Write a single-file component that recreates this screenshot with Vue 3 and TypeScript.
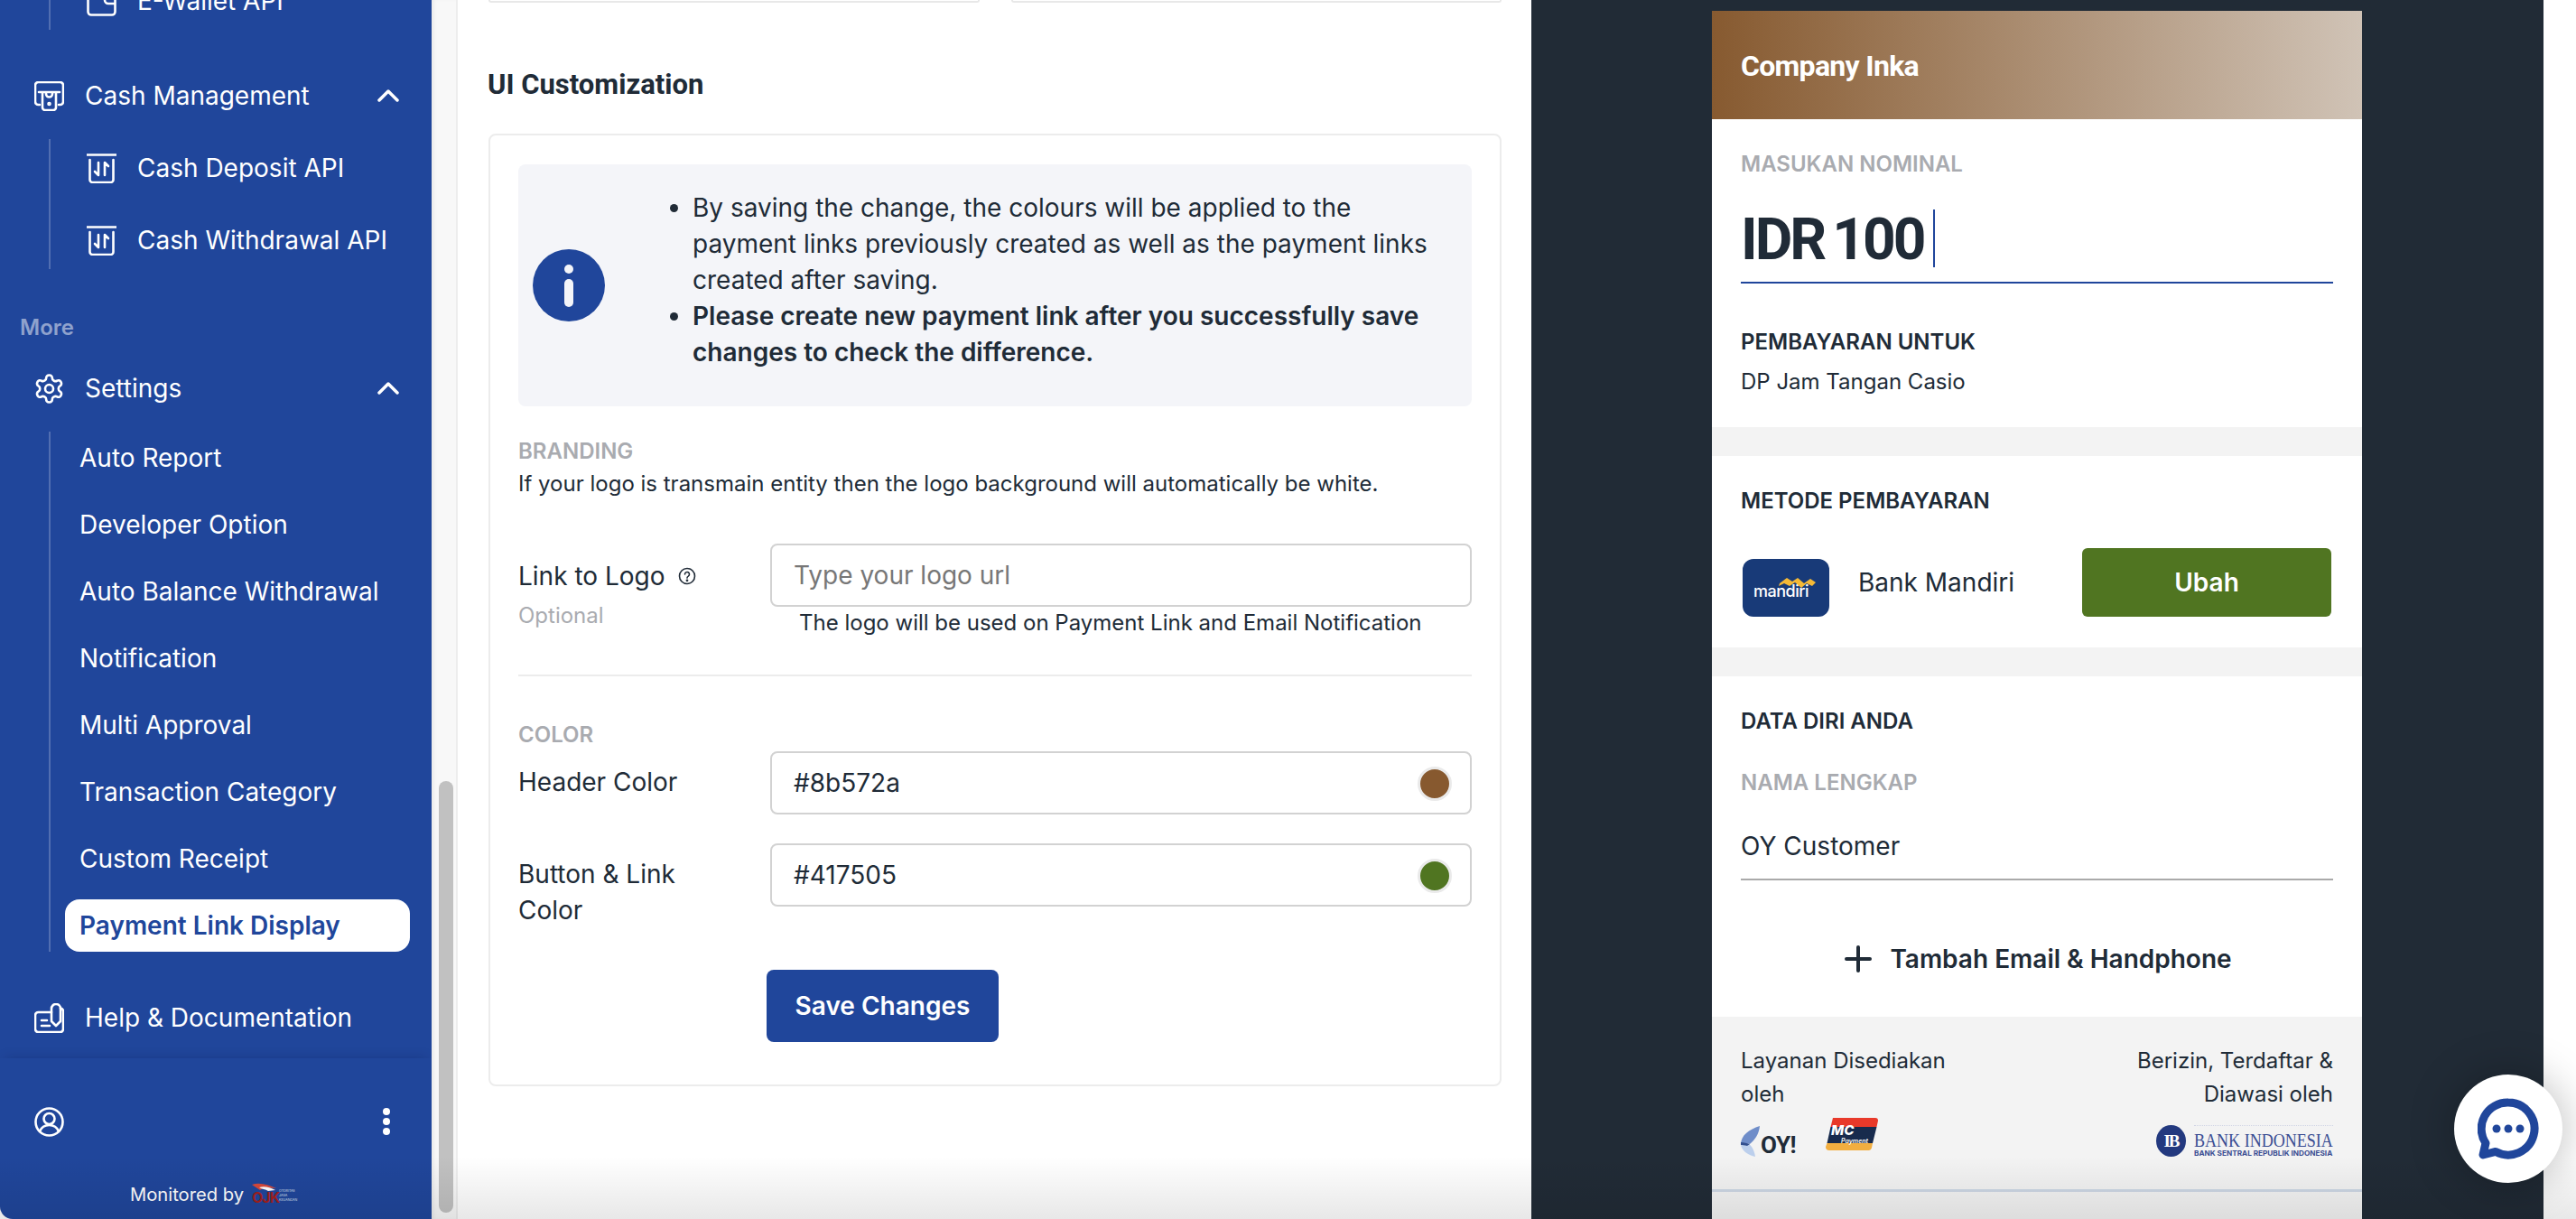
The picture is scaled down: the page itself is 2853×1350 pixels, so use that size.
<script setup lang="ts">
const settingsItems: string[] = ['Auto Report', 'Developer Option', 'Auto Balance Withdrawal', 'Notification', 'Multi Approval', 'Transaction Category', 'Custom Receipt']
const cashItems: string[] = ['Cash Deposit API', 'Cash Withdrawal API']
const gear = 'M12.22 2h-.44a2 2 0 0 0-2 2v.18a2 2 0 0 1-1 1.73l-.43.25a2 2 0 0 1-2 0l-.15-.08a2 2 0 0 0-2.73.73l-.22.38a2 2 0 0 0 .73 2.73l.15.1a2 2 0 0 1 1 1.72v.51a2 2 0 0 1-1 1.74l-.15.09a2 2 0 0 0-.73 2.73l.22.38a2 2 0 0 0 2.73.73l.15-.08a2 2 0 0 1 2 0l.43.25a2 2 0 0 1 1 1.73V20a2 2 0 0 0 2 2h.44a2 2 0 0 0 2-2v-.18a2 2 0 0 1 1-1.73l.43-.25a2 2 0 0 1 2 0l.15.08a2 2 0 0 0 2.73-.73l.22-.39a2 2 0 0 0-.73-2.73l-.15-.08a2 2 0 0 1-1-1.74v-.5a2 2 0 0 1 1-1.74l.15-.09a2 2 0 0 0 .73-2.73l-.22-.38a2 2 0 0 0-2.73-.73l-.15.08a2 2 0 0 1-2 0l-.43-.25a2 2 0 0 1-1-1.73V4a2 2 0 0 0-2-2z'
</script>

<template>
  <div class="page">
    <aside class="sidebar">
      <div class="nav">
        <div class="sub cut">
          <div class="sub-row">
            <svg class="ico" viewBox="0 0 33 33"><path d="M1.500 4v24a3.500 3.500 0 0 0 3.500 3.500H28a3.500 3.500 0 0 0 3.500-3.500V5M31.500 11H24a4 4 0 0 0 0 8h7.500" /></svg>
            <span>E-Wallet API</span>
          </div>
        </div>

        <div class="row row-first">
          <svg class="ico" viewBox="0 0 33 33">
            <path d="M6 26H4.500A3.500 3.500 0 0 1 1 22.500V4.500A3.500 3.500 0 0 1 4.500 1h24A3.500 3.500 0 0 1 32 4.500v18a3.500 3.500 0 0 1-3.500 3.500H27" />
            <path d="M5 12h23M9 12v17a3 3 0 0 0 3 3h9a3 3 0 0 0 3-3V12M13 12v2a3.500 3.500 0 0 0 7 0v-2" />
            <circle cx="16.500" cy="25" r="1" />
          </svg>
          <span class="row-label">Cash Management</span>
          <svg class="chev" viewBox="0 0 24 14"><path d="M2 12 12 2l10 10" /></svg>
        </div>
        <div class="sub">
          <div v-for="c in cashItems" :key="c" class="sub-row">
            <svg class="ico" viewBox="0 0 33 33">
              <path d="M0 1.500h33M3.500 7v22a3 3 0 0 0 3 3h20a3 3 0 0 0 3-3V7" />
              <path d="M13 10v14M9 20l4 4M20 24V10l4 4" />
            </svg>
            <span>{{ c }}</span>
          </div>
        </div>

        <div class="section-title">More</div>

        <div class="row row-settings">
          <svg class="ico gear" viewBox="1 1 22 22"><path :d="gear" /><circle cx="12" cy="12" r="3" /></svg>
          <span class="row-label">Settings</span>
          <svg class="chev" viewBox="0 0 24 14"><path d="M2 12 12 2l10 10" /></svg>
        </div>
        <div class="sub">
          <div v-for="s in settingsItems" :key="s" class="plain">{{ s }}</div>
          <div class="plain active">Payment Link Display</div>
        </div>

        <div class="row row-first">
          <svg class="ico" viewBox="0 0 33 33">
            <path d="M19 10H4.500A3.500 3.500 0 0 0 1 13.500v15A3.500 3.500 0 0 0 4.500 32h24a3.500 3.500 0 0 0 3.500-3.500V9a3.500 3.500 0 0 0-3-3.400" />
            <path d="M19 20V6a5 5 0 0 1 10 0v14l-5 5z" />
            <path d="M8 19h6M8 25h9" />
          </svg>
          <span class="row-label">Help &amp; Documentation</span>
        </div>
      </div>

      <div class="side-foot">
        <div class="profile">
          <svg class="ico" viewBox="0 0 33 33">
            <circle cx="16.500" cy="16.500" r="15" />
            <circle cx="16.500" cy="13" r="6" />
            <path d="M6 27c2-5 6-7 10.500-7S25 22 27 27" />
          </svg>
          <div class="dots"><i></i><i></i><i></i></div>
        </div>
        <div class="monitored">
          <span>Monitored by</span>
          <svg class="ojk" viewBox="0 0 54 24">
            <path d="M0 2C8-1 18 2 27 6c-6 0-14-1-18 2C6 6 3 4 0 2z" fill="#d8493c" />
            <path d="M8 5c6-2 12 0 18 3l-8 1c-3-2-7-2-10-4z" fill="#fff" />
            <text x="0" y="22" class="ojk-mark">OJK</text>
            <text x="30" y="10" class="ojk-small">OTORITAS</text>
            <text x="30" y="15" class="ojk-small">JASA</text>
            <text x="30" y="20" class="ojk-small">KEUANGAN</text>
          </svg>
        </div>
      </div>
    </aside>

    <div class="gutter"><div class="thumb"></div></div>

    <main class="main">
      <div class="stubs"><div class="stub"></div><div class="stub"></div></div>
      <h2 class="heading">UI Customization</h2>

      <section class="card">
        <div class="info">
          <svg class="info-ico" viewBox="0 0 80 80">
            <circle cx="40" cy="40" r="40" fill="#20469b" />
            <rect x="35" y="17" width="10" height="10" rx="5" fill="#f4f5f9" />
            <rect x="35" y="33" width="10" height="31" rx="5" fill="#f4f5f9" />
          </svg>
          <ul class="info-list">
            <li>By saving the change, the colours will be applied to the payment links previously created as well as the payment links created after saving.</li>
            <li><strong>Please create new payment link after you successfully save changes to check the difference.</strong></li>
          </ul>
        </div>

        <div class="group-title branding">BRANDING</div>
        <p class="desc">If your logo is transmain entity then the logo background will automatically be white.</p>

        <div class="form-row logo-row">
          <div class="label logo-label">
            <div class="label-line">
              Link to Logo
              <svg class="q" viewBox="0 0 20 20">
                <circle cx="10" cy="10" r="8.500" />
                <path d="M7.500 8a2.500 2.500 0 1 1 3.800 2.100c-.9.500-1.300 1-1.300 2" />
                <circle cx="10" cy="14.800" r=".6" />
              </svg>
            </div>
            <div class="optional">Optional</div>
          </div>
          <div class="control">
            <div class="input placeholder">Type your logo url</div>
            <div class="hint">The logo will be used on Payment Link and Email Notification</div>
          </div>
        </div>

        <div class="divider"></div>

        <div class="group-title color-title">COLOR</div>
        <div class="form-row color-row">
          <div class="label label-a">Header Color</div>
          <div class="control">
            <div class="input"><span>#8b572a</span><i class="swatch brown"></i></div>
          </div>
        </div>
        <div class="form-row color-row second">
          <div class="label label-b">Button &amp; Link Color</div>
          <div class="control">
            <div class="input"><span>#417505</span><i class="swatch green"></i></div>
          </div>
        </div>

        <button class="save">Save Changes</button>
      </section>
    </main>

    <div class="pane">
      <div class="phone">
        <header class="ph-head">Company Inka</header>

        <section class="ph-sec sec-amount">
          <div class="muted">MASUKAN NOMINAL</div>
          <div class="amount"><span>IDR 100</span><i class="caret"></i></div>
          <div class="strong pay-for">PEMBAYARAN UNTUK</div>
          <div class="small pay-desc">DP Jam Tangan Casio</div>
        </section>

        <section class="ph-sec sec-method">
          <div class="strong">METODE PEMBAYARAN</div>
          <div class="method">
            <div class="mandiri">
              <svg class="wave" viewBox="0 0 44 14"><path d="M1 8 9 2l6 4 6-4 7 6 7-5 6 4-4 4-6-3-6 5-7-6-6 4-6-3-6 3z" fill="#f5b936" /></svg>
              <span>mandiri</span>
            </div>
            <span class="bank">Bank Mandiri</span>
            <button class="ubah">Ubah</button>
          </div>
        </section>

        <section class="ph-sec sec-data">
          <div class="strong">DATA DIRI ANDA</div>
          <div class="muted name-label">NAMA LENGKAP</div>
          <div class="name">OY Customer</div>
          <div class="add">
            <svg class="plus" viewBox="0 0 30 30"><path d="M15 2v26M2 15h26" /></svg>
            <span>Tambah Email &amp; Handphone</span>
          </div>
        </section>

        <footer class="ph-foot">
          <div class="foot-col">
            <div class="small foot-text">Layanan Disediakan oleh</div>
            <div class="logos">
              <div class="oy">
                <svg class="oy-leaf" viewBox="0 0 22 34">
                  <path d="M21 0C9 4 0 10 0 21c4-2 7-3 10-1 6-5 10-11 11-20z" fill="#6f8dc9" />
                  <path d="M0 21c1 6 7 11 16 13-1-6-3-11-7-14-3-1-6-1-9 1z" fill="#bccfec" />
                  <path d="M0 18c3 0 7 1 10 2l-3 2c-3-1-6-1-7-1z" fill="#33508f" />
                </svg>
                <span>OY!</span>
              </div>
              <svg class="mc" viewBox="0 0 58 36">
                <path d="M8 0h47a3 3 0 0 1 3 3l-1.500 7H5.500z" fill="#e8392a" />
                <path d="M5.500 10h51L52 28H1.500z" fill="#182b4d" />
                <path d="M1.500 28H52l-1 5a4 4 0 0 1-4 3H4a4 4 0 0 1-4-4z" fill="#f2ae40" />
                <text x="6" y="19" class="mc-big">MC</text>
                <text x="17" y="28" class="mc-small">Payment</text>
              </svg>
            </div>
          </div>
          <div class="foot-col right">
            <div class="small foot-text">Berizin, Terdaftar &amp; Diawasi oleh</div>
            <div class="logos">
              <div class="bi">
                <div class="bi-seal">IB</div>
                <div class="bi-words">
                  <div class="bi-main">BANK INDONESIA</div>
                  <div class="bi-sub">BANK SENTRAL REPUBLIK INDONESIA</div>
                </div>
              </div>
            </div>
          </div>
        </footer>
      </div>
    </div>

    <div class="strip"></div>

    <div class="fade"></div>
    <div class="chat">
      <svg viewBox="0 0 68 68">
        <path d="M34 5a29 29 0 1 1-14 54.400L6 63l3-13A29 29 0 0 1 34 5z" fill="none" stroke="#20469b" stroke-width="9" stroke-linejoin="round" />
        <circle cx="21" cy="34" r="4.500" fill="#20469b" />
        <circle cx="34" cy="34" r="4.500" fill="#20469b" />
        <circle cx="47" cy="34" r="4.500" fill="#20469b" />
      </svg>
    </div>
  </div>
</template>

<style>
html, body { margin: 0; padding: 0; background: #fff; overflow: hidden; }
</style>

<style scoped>
.page {
  position: relative;
  display: flex;
  width: 2853px;
  height: 1350px;
  overflow: hidden;
  background: #fff;
  font-family: Inter, "Noto Sans", sans-serif;
  color: #202b37;
}

/* sidebar */
.sidebar {
  width: 478px;
  flex: none;
  display: flex;
  flex-direction: column;
  justify-content: space-between;
  background: #20469b;
  color: #fff;
  border-bottom-left-radius: 14px;
  font-size: 28px;
}
.ico {
  width: 33px;
  height: 33px;
  flex: none;
  fill: none;
  stroke: #fff;
  stroke-width: 2.600px;
  stroke-linecap: round;
  stroke-linejoin: round;
}
.gear { stroke-width: 1.750px; }
.row {
  height: 64px;
  display: flex;
  align-items: center;
  padding: 0 36px 0 38px;
}
.row-first { margin-top: 41px; }
.row-settings { margin-top: 20px; }
.row-label { margin-left: 23px; flex: 1; }
.chev {
  width: 24px;
  height: 14px;
  fill: none;
  stroke: #fff;
  stroke-width: 3.500px;
  stroke-linecap: round;
  stroke-linejoin: round;
}
.sub {
  margin: 16px 24px 0 54px;
  border-left: 2px solid rgba(255, 255, 255, 0.22);
  display: flex;
  flex-direction: column;
  gap: 16px;
}
.cut {
  margin-top: 0;
  height: 33px;
  overflow: hidden;
  justify-content: flex-end;
}
.sub-row {
  height: 64px;
  flex: none;
  display: flex;
  align-items: center;
  gap: 23px;
  padding-left: 40px;
}
.section-title {
  margin: 50px 0 0 22px;
  height: 30px;
  line-height: 30px;
  font-size: 24px;
  font-weight: 600;
  color: rgba(255, 255, 255, 0.5);
}
.plain {
  height: 58px;
  line-height: 58px;
  margin-left: 16px;
  padding-left: 16px;
  border-radius: 16px;
}
.active {
  background: #fff;
  color: #20469b;
  font-weight: 600;
}
.side-foot {
  height: 178px;
  box-sizing: border-box;
  padding-top: 50px;
  box-shadow: 0 -6px 12px -6px rgba(10, 20, 60, 0.22);
}
.profile {
  height: 40px;
  display: flex;
  align-items: center;
  justify-content: space-between;
  padding: 0 46px 0 38px;
}
.dots { display: flex; flex-direction: column; gap: 3px; }
.dots i { width: 8px; height: 8px; border-radius: 50%; background: #fff; }
.monitored {
  margin-top: 46px;
  height: 28px;
  display: flex;
  align-items: center;
  padding-left: 144px;
  font-size: 20.200px;
}
.ojk { width: 54px; height: 24px; margin-left: 9px; }
.ojk-mark { font-size: 16px; font-weight: 700; fill: #a02020; font-family: Inter, sans-serif; letter-spacing: -1px; }
.ojk-small { font-size: 3.600px; fill: #dfe4f2; font-family: Inter, sans-serif; }

/* scrollbar */
.gutter {
  width: 29px;
  flex: none;
  box-sizing: border-box;
  padding: 865px 0 0 8px;
  background: #f8f8f8;
  border-right: 2px solid #ededed;
  box-shadow: inset 4px 0 6px -4px rgba(0, 0, 0, 0.12);
}
.thumb { width: 16px; height: 478px; border-radius: 8px; background: #c1c1c1; }

/* main */
.main {
  width: 1189px;
  flex: none;
  box-sizing: border-box;
  padding: 0 33px 0 34px;
  background: #fff;
}
.stubs { display: flex; gap: 35px; height: 3px; }
.stub {
  flex: 1;
  border: 2px solid #e8e8e8;
  border-top: 0;
  border-radius: 0 0 8px 8px;
}
.heading {
  margin: 71px 0 0 -1px;
  height: 40px;
  line-height: 40px;
  font-family: Roboto, sans-serif;
  font-size: 31px;
  font-weight: 700;
  color: #202b37;
}
.card {
  margin-top: 34px;
  box-sizing: border-box;
  height: 1055px;
  border: 2px solid #ececec;
  border-radius: 8px;
  padding: 32px 31px 0;
}
.info {
  height: 268px;
  display: flex;
  align-items: center;
  padding-left: 16px;
  background: #f4f5f9;
  border-radius: 8px;
  box-sizing: border-box;
}
.info-ico { width: 80px; height: 80px; flex: none; }
.info-list {
  margin: -12px 32px 0 97px;
  padding: 0;
  font-size: 28px;
  line-height: 40px;
}
.info-list strong { font-weight: 600; }
.group-title {
  height: 30px;
  line-height: 32px;
  font-size: 24px;
  font-weight: 600;
  color: #a9abb0;
}
.branding { margin-top: 34px; }
.desc {
  margin: 4px 0 0;
  font-size: 24px;
  line-height: 36px;
}
.form-row { display: flex; }
.logo-row { margin-top: 48px; }
.label { width: 279px; flex: none; font-size: 28px; line-height: 40px; box-sizing: border-box; padding-right: 60px; }
.logo-label { padding-top: 16px; padding-right: 0; }
.label-line { display: flex; align-items: center; gap: 14px; }
.q {
  width: 20px;
  height: 20px;
  fill: none;
  stroke: #202b37;
  stroke-width: 1.600px;
  stroke-linecap: round;
}
.optional { margin-top: 10px; font-size: 24px; line-height: 28px; color: #a9abb0; }
.control { flex: 1; }
.input {
  height: 70px;
  box-sizing: border-box;
  display: flex;
  align-items: center;
  justify-content: space-between;
  padding: 0 20px 0 24px;
  border: 2px solid #d2d2d2;
  border-radius: 8px;
  font-size: 28px;
}
.placeholder { color: #777; }
.hint {
  margin-top: 3px;
  padding-left: 32px;
  font-size: 24px;
  line-height: 30px;
}
.divider { margin-top: 42px; height: 2px; background: #ececec; }
.color-title { margin-top: 49px; }
.color-row { margin-top: 4px; }
.second { margin-top: 32px; }
.label-a { padding-top: 14px; }
.label-b { padding-top: 14px; }
.swatch {
  width: 32px;
  height: 32px;
  border-radius: 50%;
  border: 3px solid #eaeaea;
  margin-top: 2px;
  display: block;
  flex: none;
  box-sizing: content-box;
}
.brown { background: #87592f; }
.green { background: #507521; }
.save {
  display: block;
  margin: 46px 0 0 275px;
  width: 257px;
  height: 80px;
  border: 0;
  border-radius: 8px;
  background: #20469b;
  color: #fff;
  font-family: Inter, sans-serif;
  font-size: 28px;
  font-weight: 600;
}

/* preview */
.pane {
  width: 1121px;
  flex: none;
  box-sizing: border-box;
  padding: 12px 0 0 200px;
  background: #212b36;
}
.phone {
  width: 720px;
  height: 1338px;
  background: #f3f3f3;
  overflow: hidden;
}
.ph-head {
  height: 120px;
  line-height: 122px;
  padding-left: 32px;
  background: linear-gradient(90deg, #875a30 0%, #d0c3b6 100%);
  color: #fff;
  font-family: Roboto, sans-serif;
  font-size: 32px;
  font-weight: 700;
  letter-spacing: -0.700px;
}
.ph-sec { background: #fff; padding: 34px 32px 0; }
.sec-amount { height: 341px; box-sizing: border-box; }
.sec-method { height: 212px; box-sizing: border-box; margin-top: 32px; }
.sec-data { height: 377px; box-sizing: border-box; margin-top: 32px; }
.muted, .strong {
  height: 30px;
  line-height: 32px;
  font-size: 24px;
  font-weight: 600;
}
.muted { color: #a9abb0; }
.small { font-size: 24px; line-height: 30px; }
.amount {
  margin-top: 36px;
  height: 80px;
  display: flex;
  align-items: flex-start;
  border-bottom: 2px solid #20469b;
  font-family: Roboto, sans-serif;
  font-size: 64px;
  font-weight: 700;
  line-height: 68px;
  letter-spacing: -3px;
  word-spacing: -4px;
}
.caret { width: 2px; height: 64px; margin-left: 11px; background: #20469b; }
.pay-for { margin-top: 49px; }
.pay-desc { margin-top: 15px; }
.method {
  margin-top: 38px;
  height: 76px;
  display: flex;
  align-items: center;
}
.mandiri {
  position: relative;
  width: 96px;
  height: 64px;
  margin: 12px 0 0 2px;
  flex: none;
  box-sizing: border-box;
  padding: 26px 0 0 12px;
  border-radius: 12px;
  background: #183a78;
  color: #fff;
  font-size: 18px;
  line-height: 20px;
  font-weight: 500;
  letter-spacing: -0.500px;
}
.wave { position: absolute; top: 19px; left: 40px; width: 44px; height: 14px; }
.bank { margin-left: 32px; font-size: 28px; }
.ubah {
  margin: 0 2px 0 auto;
  width: 276px;
  height: 76px;
  border: 0;
  border-radius: 6px;
  background: #507521;
  color: #fff;
  font-family: Inter, sans-serif;
  font-size: 28px;
  font-weight: 600;
}
.name-label { margin-top: 38px; }
.name {
  margin-top: 36px;
  height: 56px;
  line-height: 40px;
  font-size: 28px;
  border-bottom: 2px solid #aaa;
}
.add {
  margin-top: 67px;
  height: 40px;
  display: flex;
  align-items: center;
  justify-content: center;
  gap: 20px;
  padding-left: 3px;
  font-size: 28px;
  font-weight: 600;
}
.plus { width: 30px; height: 30px; fill: none; stroke: #202b37; stroke-width: 4px; stroke-linecap: round; }
.ph-foot {
  height: 194px;
  box-sizing: border-box;
  padding: 30px 32px 0;
  display: flex;
  justify-content: space-between;
  border-bottom: 3px solid #cdd7e4;
}
.foot-col { width: 240px; }
.foot-text { line-height: 37px; }
.right { text-align: right; width: 260px; }
.logos { margin-top: 8px; height: 44px; display: flex; align-items: flex-start; gap: 32px; }
.right .logos { justify-content: flex-end; margin-top: 16px; }
.oy { display: flex; align-items: flex-end; width: 62px; margin-top: 9px; height: 34px; }
.oy-leaf { width: 22px; height: 34px; flex: none; }
.oy span {
  font-family: Roboto, sans-serif;
  font-size: 26px;
  line-height: 26px;
  font-weight: 700;
  letter-spacing: -0.500px;
}
.mc { width: 58px; height: 36px; flex: none; }
.mc-big { font: italic 800 15px Inter, sans-serif; fill: #fff; }
.mc-small { font: italic 600 7px Inter, sans-serif; fill: #fff; }
.bi { display: flex; gap: 9px; align-items: flex-start; }
.bi-seal {
  width: 33px;
  height: 35px;
  border-radius: 50%;
  background: #23397f;
  color: #fff;
  font: 700 19px/35px "Liberation Serif", serif;
  text-align: center;
  letter-spacing: -2px;
}
.bi-words {
  width: 154px;
  overflow: hidden;
  padding-top: 6px;
  text-align: left;
  color: #3a4d92;
  border-top: 1px dotted #cfd4e4;
}
.bi-main {
  font: 22px/20px "Liberation Serif", serif;
  white-space: nowrap;
  width: 186px;
  transform: scaleX(0.82);
  transform-origin: left center;
}
.bi-sub { font: 700 8.200px/9px Inter, sans-serif; white-space: nowrap; }

.strip { flex: 1; background: #fff; }

/* overlays */
.fade {
  position: absolute;
  left: 0;
  right: 0;
  bottom: 0;
  height: 70px;
  pointer-events: none;
  background: linear-gradient(180deg, rgba(0, 0, 0, 0) 0%, rgba(0, 0, 0, 0.09) 100%);
}
.chat {
  position: absolute;
  right: 15px;
  bottom: 40px;
  width: 120px;
  height: 120px;
  border-radius: 50%;
  background: #fff;
  box-shadow: 0 0 50px rgba(0, 0, 0, 0.28);
  display: flex;
  align-items: center;
  justify-content: center;
}
.chat svg { width: 68px; height: 68px; }
</style>
